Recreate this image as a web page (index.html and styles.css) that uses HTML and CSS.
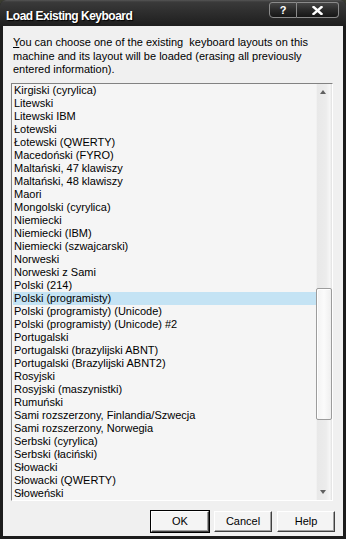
FILE: index.html
```html
<!DOCTYPE html>
<html>
<head>
  <meta charset="utf-8">
  <link rel="stylesheet" href="styles.css">
</head>
<body>
  <div class="window">
    <div class="titlebar">
      <span class="title">Load Existing Keyboard</span>
      <div class="caption-buttons">
        <span class="cap-btn help-btn">?</span>
        <span class="cap-btn close-btn">
          <svg width="11" height="9" viewBox="0 0 11 9"><path d="M1.5 1 L9.5 8 M9.5 1 L1.5 8" stroke="#fff" stroke-width="2.4" stroke-linecap="square"/></svg>
        </span>
      </div>
    </div>
    <div class="client">
      <p class="intro">You can choose one of the existing&nbsp; keyboard layouts on this machine and its layout will be loaded (erasing all previously entered information).</p>
      <div class="listbox">
        <ul class="items">
          <li>Kirgiski (cyrylica)</li>
          <li>Litewski</li>
          <li>Litewski IBM</li>
          <li>Łotewski</li>
          <li>Łotewski (QWERTY)</li>
          <li>Macedoński (FYRO)</li>
          <li>Maltański, 47 klawiszy</li>
          <li>Maltański, 48 klawiszy</li>
          <li>Maori</li>
          <li>Mongolski (cyrylica)</li>
          <li>Niemiecki</li>
          <li>Niemiecki (IBM)</li>
          <li>Niemiecki (szwajcarski)</li>
          <li>Norweski</li>
          <li>Norweski z Sami</li>
          <li>Polski (214)</li>
          <li class="selected">Polski (programisty)</li>
          <li>Polski (programisty) (Unicode)</li>
          <li>Polski (programisty) (Unicode) #2</li>
          <li>Portugalski</li>
          <li>Portugalski (brazylijski ABNT)</li>
          <li>Portugalski (Brazylijski ABNT2)</li>
          <li>Rosyjski</li>
          <li>Rosyjski (maszynistki)</li>
          <li>Rumuński</li>
          <li>Sami rozszerzony, Finlandia/Szwecja</li>
          <li>Sami rozszerzony, Norwegia</li>
          <li>Serbski (cyrylica)</li>
          <li>Serbski (łaciński)</li>
          <li>Słowacki</li>
          <li>Słowacki (QWERTY)</li>
          <li>Słoweński</li>
        </ul>
        <div class="scrollbar">
          <div class="arrow up"></div>
          <div class="track">
            <div class="thumb"></div>
          </div>
          <div class="arrow down"></div>
        </div>
      </div>
      <div class="buttons">
        <button class="btn default">OK</button>
        <button class="btn">Cancel</button>
        <button class="btn">Help</button>
      </div>
    </div>
  </div>
</body>
</html>
```

FILE: styles.css
```css
html, body {
  margin: 0;
  padding: 0;
  background: #3a3c30;
}
.window {
  width: 346px;
  height: 539px;
  box-sizing: border-box;
  background: #1c1c1c;
  border-radius: 6px 6px 0 0;
  padding: 0 3px 3px 3px;
  display: flex;
  flex-direction: column;
  font: 11px "Liberation Sans", Arial, sans-serif;
}
.titlebar {
  height: 26px;
  flex: none;
  display: flex;
  align-items: flex-start;
  justify-content: space-between;
  background: linear-gradient(#555 0, #3a3a3a 2px, #2e2e2e 12px, #1e1e1e 26px);
  margin: 0 -3px;
  padding: 0 7px 0 6px;
  border-radius: 6px 6px 0 0;
}
.title {
  color: #fff;
  font: bold 12px "Liberation Sans", Arial, sans-serif;
  letter-spacing: -0.5px;
  margin-top: 9px;
  text-shadow: 1px 1px 1px #000;
}
.caption-buttons {
  display: flex;
  margin-top: 2px;
}
.cap-btn {
  height: 16px;
  box-sizing: border-box;
  border: 1px solid #8a8a8a;
  background: linear-gradient(#454545, #2a2a2a 50%, #161616);
  display: flex;
  align-items: center;
  justify-content: center;
  color: #fff;
  font: bold 11px "Liberation Sans", Arial, sans-serif;
}
.help-btn {
  width: 28px;
  border-radius: 3px 0 0 4px;
}
.close-btn {
  width: 42px;
  border-left: none;
  border-radius: 0 3px 4px 0;
}
.client {
  flex: 1;
  background: #f0f0f0;
  display: flex;
  flex-direction: column;
  padding: 10px 8px 0 8px;
}
.intro {
  margin: 0 0 6px 2px;
  line-height: 13.5px;
  color: #000;
}
.intro::first-letter {
  text-decoration: underline;
}
.listbox {
  height: 418px;
  box-sizing: border-box;
  margin-right: 2px;
  border: 1px solid;
  border-color: #828282 #ffffff #ffffff #828282;
  background: #f5f5f5;
  display: flex;
}
.items {
  list-style: none;
  margin: 0;
  padding: 0 0 0 1px;
  flex: 1;
}
.items li {
  height: 13px;
  line-height: 13px;
  padding-left: 1px;
  white-space: nowrap;
}
.items li.selected {
  background: #c4e3f4;
}
.scrollbar {
  width: 16px;
  display: flex;
  flex-direction: column;
  background: linear-gradient(90deg, #fafafa 0, #e8e8e8 1px, #ececec 10px, #f6f6f6 14px, #e0e0e0 16px);
}
.arrow {
  height: 17px;
  position: relative;
}
.arrow::after {
  content: "";
  position: absolute;
  left: 4px;
  width: 0;
  height: 0;
  border-left: 3.5px solid transparent;
  border-right: 3.5px solid transparent;
}
.arrow.up::after {
  top: 6px;
  border-bottom: 4px solid #606060;
}
.arrow.down::after {
  bottom: 6px;
  border-top: 4px solid #606060;
}
.track {
  flex: 1;
  padding-top: 187px;
}
.thumb {
  height: 132px;
  box-sizing: border-box;
  border: 1px solid #9c9c9c;
  border-radius: 2px;
  background: linear-gradient(90deg, #f2f2f2, #fbfbfb 50%, #efefef);
  box-shadow: inset 1px 1px 0 #fff;
}
.buttons {
  display: flex;
  justify-content: flex-end;
  gap: 5px;
  margin-top: 10px;
}
.btn {
  width: 58px;
  height: 21px;
  box-sizing: border-box;
  font: 11px "Liberation Sans", Arial, sans-serif;
  color: #000;
  background: #f4f4f4;
  border: 1px solid;
  border-color: #fff #404040 #404040 #fff;
  box-shadow: inset -1px -1px 0 #a0a0a0;
  padding: 0;
}
.btn.default {
  outline: 1px solid #000;
  outline-offset: 0;
}
```
